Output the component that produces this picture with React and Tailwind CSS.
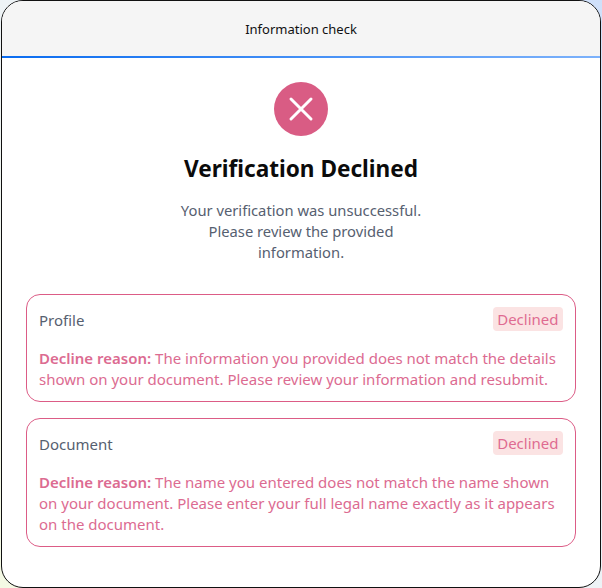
const fontStack = { fontFamily: '"Noto Sans", "Open Sans", sans-serif' };

function ReviewCard({ title, reason }) {
  return (
    <section className="rounded-[14px] border border-[#dc5c86] px-3 pt-[12px] pb-[11px]">
      <div className="flex items-start justify-between">
        <span className="text-[15px] leading-[26px] text-[#566070]">{title}</span>
        <span className="rounded-[4px] bg-[#fbe3e3] px-[4.5px] text-[15px] leading-[24px] text-[#df6b91]">Declined</span>
      </div>
      <p className="mt-[15px] text-[15px] leading-[21px] text-[#dc6b91]">
        <strong className="font-semibold">Decline reason:</strong> {reason}
      </p>
    </section>
  );
}

export default function App() {
  return (
    <div className="h-[588px] w-[602px] bg-[linear-gradient(45deg,#f4f9e4_0%,#eef3f6_50%,#cfe0fa_100%)] px-px" style={fontStack}>
      <div className="h-[588px] w-[600px] overflow-hidden rounded-[22px] border border-[#111111] bg-white">
        <header className="flex h-[57px] items-center justify-center border-b-2 border-b-transparent bg-[#f5f5f5] pt-[2px] text-[13px] text-[#111111] [border-image:linear-gradient(90deg,#0a6cf0,#7db2fb)_1]">
          Information check
        </header>
        <main className="flex flex-col items-center px-[24px] pt-[24px]">
          <div className="flex h-[54px] w-[54px] items-center justify-center rounded-full bg-[#d95c84]">
            <svg width="26" height="26" viewBox="0 0 26 26" fill="none" stroke="white" strokeWidth="3" strokeLinecap="round">
              <path d="M3 3 L23 23 M23 3 L3 23" />
            </svg>
          </div>
          <h1 className="mt-[17px] text-[22.6px] leading-[32px] font-bold text-[#0b0b0b]">Verification Declined</h1>
          <p className="mt-[15px] w-[260px] text-center text-[14.75px] leading-[21px] text-[#566070]">
            Your verification was unsuccessful. Please review the provided information.
          </p>
          <div className="mt-[31px] flex w-full flex-col gap-[16px]">
            <ReviewCard
              title="Profile"
              reason="The information you provided does not match the details shown on your document. Please review your information and resubmit."
            />
            <ReviewCard
              title="Document"
              reason="The name you entered does not match the name shown on your document. Please enter your full legal name exactly as it appears on the document."
            />
          </div>
        </main>
      </div>
    </div>
  );
}
